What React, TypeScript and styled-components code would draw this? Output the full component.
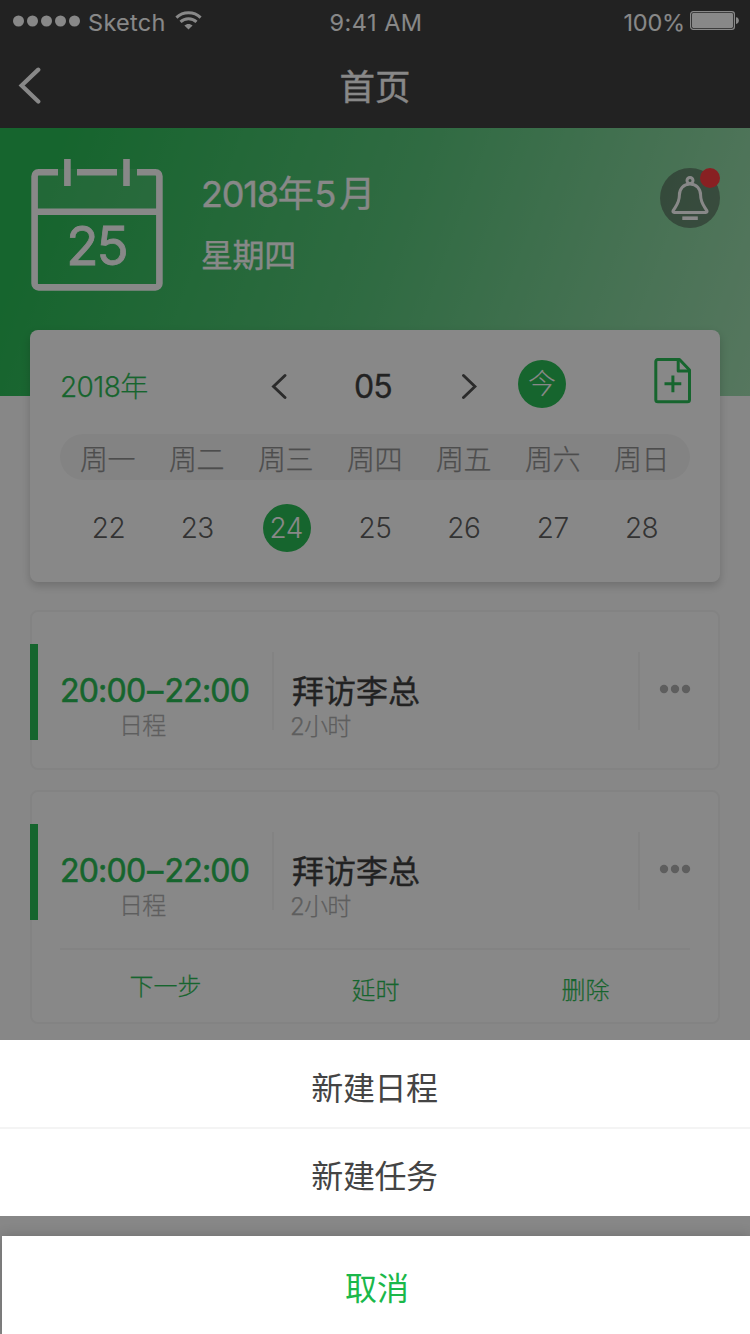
import React from 'react';
import styled, { createGlobalStyle, css } from 'styled-components';

const GlobalStyle = createGlobalStyle`
  * { box-sizing: border-box; }
  body { margin: 0; }
`;

const green = '#1bb84a';
const line = '#f4f4f4';

/* weight between regular and bold */
const medium = css`
  font-weight: 400;
  -webkit-text-stroke: 0.35px currentColor;
`;

/* weight between light and regular */
const light = css`
  font-weight: 300;
  -webkit-text-stroke: 0.25px currentColor;
`;

const Screen = styled.div`
  position: relative;
  width: 750px;
  height: 1334px;
  overflow: hidden;
  background: #fdfdfd;
  color: #333;
  font-family: Inter, 'Noto Sans CJK SC', sans-serif;
  font-weight: 400;
`;

const StatusBar = styled.div`
  display: grid;
  grid-template-columns: 1fr auto 1fr;
  align-items: center;
  height: 40px;
  padding: 5px 11px 0 13px;
  background: #333;
  color: #fff;
  font-size: 23.5px;
  line-height: 35px;
  letter-spacing: 0.5px;
  white-space: nowrap;
`;

const StatusGroup = styled.div<{ $end?: boolean }>`
  display: flex;
  align-items: center;
  justify-content: ${p => (p.$end ? 'flex-end' : 'flex-start')};
  svg { display: block; margin-top: -4px; }
`;

const Carrier = styled.span`
  margin: 0 9px 0 7px;
  letter-spacing: 0.3px;
`;

const Percent = styled.span`
  margin-right: 5px;
  letter-spacing: -0.2px;
`;

const NavBar = styled.header`
  display: grid;
  grid-template-columns: 60px 1fr 60px;
  align-items: center;
  height: 88px;
  padding-top: 3px;
  background: #333;
  color: #fff;
  svg { display: block; margin-left: 18px; }
`;

const NavTitle = styled.h1`
  ${medium}
  margin: 0;
  padding-top: 4px;
  font-size: 35.5px;
  line-height: 50px;
  text-align: center;
`;

const Hero = styled.section`
  display: flex;
  align-items: flex-start;
  height: 268px;
  padding: 30px 30px 0;
  background: linear-gradient(110deg, ${green} 8%, #4dc472 50%, #89d69f 88%, #9bdcac 100%);
  color: #fff;
`;

const HeroCalendar = styled.div`
  display: grid;
  width: 134px;
  height: 134px;
  svg, span { grid-area: 1 / 1; }
  span {
    ${medium}
    padding: 61px 1px 0 0;
    font-size: 53px;
    line-height: 54px;
    letter-spacing: -2px;
    text-align: center;
    -webkit-text-stroke-width: 0.8px;
  }
`;

const HeroDate = styled.div`
  ${medium}
  flex: 1;
  padding: 9px 0 0 37px;
`;

const HeroMonth = styled.div`
  font-size: 36px;
  line-height: 54px;
  letter-spacing: -1.2px;
`;

const MonthNumber = styled.span`
  margin: 0 4px 0 2px;
`;

const HeroWeekday = styled.div`
  padding-top: 8px;
  font-size: 32px;
  line-height: 54px;
  letter-spacing: -0.4px;
`;

const BellButton = styled.div`
  position: relative;
  width: 60px;
  height: 60px;
  margin-top: 10px;
  border-radius: 50%;
  background: rgba(51, 51, 51, 0.5);
  svg { display: block; }
`;

const BellDot = styled.i`
  position: absolute;
  top: 0;
  right: 0;
  width: 20px;
  height: 20px;
  border-radius: 50%;
  background: #ff2f33;
`;

const CalendarCard = styled.section`
  position: relative;
  height: 252px;
  margin: -66px 30px 28px;
  padding-top: 24px;
  border-radius: 8px;
  background: #fff;
  box-shadow: 0 4px 10px rgba(0, 0, 0, 0.2);
`;

const CalendarHead = styled.div`
  display: grid;
  grid-template-columns: 211px 80px 110px 57px 135px 1fr;
  align-items: center;
  height: 60px;
  padding-left: 30px;
  svg { display: block; margin-top: 5px; }
  svg:last-child { margin: 0 0 8px 0.5px; }
`;

const YearLabel = styled.span`
  ${light}
  padding-top: 1px;
  color: ${green};
  font-size: 28px;
  letter-spacing: -0.6px;
`;

const MonthLabel = styled.span`
  ${medium}
  margin-left: 3px;
  padding-top: 5px;
  font-size: 32px;
  letter-spacing: -1px;
`;

const Circle = styled.span`
  display: grid;
  place-items: center;
  width: 48px;
  height: 48px;
  border-radius: 50%;
  background: ${green};
  color: #fff;
  font-weight: 300;
  line-height: 48px;
`;

const TodayCircle = styled(Circle)`
  font-size: 28px;
`;

const week = css`
  display: grid;
  grid-template-columns: repeat(7, 1fr);
  justify-items: center;
  align-items: center;
  font-size: 28px;
`;

const WeekHead = styled.div`
  ${week}
  ${light}
  height: 46px;
  margin: 20px 30px 0;
  padding: 1px 4px 0 3px;
  border-radius: 23px;
  background: #f5f5f5;
  color: #888;
  letter-spacing: -0.5px;
`;

const WeekDays = styled.div`
  ${week}
  height: 48px;
  margin: 24px 34px 0;
  color: #555;
  font-weight: 300;
  letter-spacing: -0.5px;
  ${Circle} {
    margin-left: 1px;
    padding-right: 1px;
  }
`;

const ScheduleCard = styled.article<{ $tall?: boolean }>`
  position: relative;
  height: ${p => (p.$tall ? 234 : 160)}px;
  margin: 0 30px 20px;
  border: 2px solid ${line};
  border-radius: 8px;
  background: #fff;
`;

const Accent = styled.i`
  position: absolute;
  left: -2px;
  top: 32px;
  width: 8px;
  height: 96px;
  background: ${green};
`;

const ScheduleRow = styled.div`
  display: flex;
  height: 78px;
  margin-top: 40px;
`;

const TimeCell = styled.div`
  width: 242px;
  padding: 15px 0 0 28px;
  border-right: 2px solid ${line};
  white-space: nowrap;
`;

const TimeRange = styled.div`
  ${medium}
  color: ${green};
  font-size: 32px;
  line-height: 48px;
  letter-spacing: -0.8px;
  -webkit-text-stroke-width: 0.6px;
`;

const Dash = styled.span`
  margin: 0 2px;
`;

const Caption = styled.div<{ $indent?: number }>`
  ${light}
  margin-top: -6px;
  padding-left: ${p => p.$indent || 0}px;
  color: #aaa;
  font-size: 24px;
  line-height: 34px;
  letter-spacing: -0.8px;
`;

const TopicCell = styled.div`
  flex: 1;
  padding: 15px 0 0 16px;
  border-right: 2px solid ${line};
`;

const Topic = styled.div`
  ${medium}
  padding: 1px 0 0 2px;
  margin-bottom: -1px;
  font-size: 32px;
  line-height: 48px;
`;

const MoreCell = styled.div`
  width: 78px;
  padding: 32px 0 0 19px;
  svg { display: block; }
`;

const Actions = styled.div`
  ${light}
  display: grid;
  grid-template-columns: repeat(3, 1fr);
  margin: 38px 28px 0;
  padding-top: 21px;
  border-top: 2px solid ${line};
  color: ${green};
  font-size: 24px;
  line-height: 40px;
  text-align: center;
`;

const Action = styled.span<{ $raised?: boolean }>`
  margin-top: ${p => (p.$raised ? -4 : 0)}px;
  padding-left: 1px;
`;

const Mask = styled.div`
  position: absolute;
  inset: 0;
  background: rgba(17, 17, 17, 0.5);
`;

const Sheet = styled.div`
  position: absolute;
  left: 0;
  right: 0;
  bottom: 0;
  height: 294px;
  overflow: hidden;
  font-size: 32px;
  text-align: center;
  letter-spacing: -0.4px;
`;

const SheetItem = styled.div`
  height: 88px;
  padding-right: 1px;
  background: #fff;
  color: #444;
  line-height: 97px;
  & + & {
    height: 89px;
    margin-top: -1px;
    border-top: 2px solid ${line};
    line-height: 95px;
  }
`;

const SheetCancel = styled.div`
  height: 98px;
  margin: 20px 0 0 2px;
  padding-left: 2px;
  background: #fff;
  color: ${green};
  line-height: 105px;
  letter-spacing: 0;
  box-shadow: 0 0 12px rgba(0, 0, 0, 0.2);
`;

const Chevron = ({ flip, size = 1, color = '#444' }: { flip?: boolean; size?: number; color?: string }) => (
  <svg width={16 * size} height={27 * size} viewBox="0 0 16 27" fill="none" stroke={color} strokeWidth="2.9" strokeLinecap="round">
    <path d={flip ? 'M2.5 2.5 14 13.5 2.5 24.5' : 'M14 2.5 2.5 13.5 14 24.5'} />
  </svg>
);

const SignalDots = () => (
  <svg width="68" height="12" viewBox="0 0 68 12" fill="#fff">
    {[5.5, 19.5, 33.5, 47.5, 61.5].map(x => <circle key={x} cx={x} cy="6" r="5.5" />)}
  </svg>
);

const Wifi = () => (
  <svg width="27" height="19" viewBox="0 0 27 19" fill="none" stroke="#fff" strokeWidth="2.9">
    <path d="M1.4 6.6C8 .1 19 .1 25.6 6.6" />
    <path d="M5.5 10.9c4.4-4.3 11.6-4.3 16 0" />
    <path d="M9.4 14.6c2.3-2.3 5.9-2.3 8.2 0l-4.1 4z" fill="#fff" stroke="none" />
  </svg>
);

const Battery = () => (
  <svg width="49" height="19" viewBox="0 0 49 19">
    <rect x=".6" y=".6" width="43.8" height="17.8" rx="2.6" fill="none" stroke="#fff" strokeWidth="1.2" />
    <rect x="2" y="2" width="41" height="15" rx="1.4" fill="#fff" />
    <path d="M46 6.2c3.8 0 3.8 6.8 0 6.8z" fill="#fff" />
  </svg>
);

const CalendarIcon = () => (
  <svg width="134" height="134" viewBox="0 0 134 134" fill="none" stroke="#fff" strokeWidth="6.6">
    <path d="M4.5 11h125v43H4.5z" fill="#fff" fillOpacity=".1" stroke="none" />
    <path d="M28 14.2H8.6a4 4 0 0 0-4 4v107.2a4 4 0 0 0 4 4h116.8a4 4 0 0 0 4-4V18.2a4 4 0 0 0-4-4H107M47 14.2h40M4.6 53.8h124.8M37.4 1v27M96.5 1v27" />
  </svg>
);

const Bell = () => (
  <svg width="60" height="60" viewBox="0 0 60 60" fill="none" stroke="#fff" strokeWidth="3" strokeLinejoin="round">
    <circle cx="30" cy="12.4" r="3" />
    <path d="M30 16c-6.5 0-10.6 5-10.6 11 0 8-3.2 10.5-6.2 15.5-.6 1.2-.2 2 1 2h31.6c1.2 0 1.6-.8 1-2-3-5-6.2-7.500-6.2-15.500 0-6-4.100-11-10.600-11z" />
    <path d="M22.3 50.2h15.5" strokeWidth="3.6" />
  </svg>
);

const AddFile = () => (
  <svg width="38" height="47" viewBox="0 0 38 47" fill="none" stroke={green} strokeWidth="3" strokeLinejoin="round">
    <path d="M3.8 2.5h21.7l10 10.5v29.7a2 2 0 0 1-2 2H3.8a2 2 0 0 1-2-2V4.5a2 2 0 0 1 2-2z" />
    <path d="M24.2 2.5v11.5h11.3M10.5 26.8h16.8M18.9 18.5v16.8" />
  </svg>
);

const More = () => (
  <svg width="32" height="10" viewBox="0 0 32 10" fill="#aaa">
    {[5, 16, 27].map(x => <circle key={x} cx={x} cy="5" r="4.2" />)}
  </svg>
);

const weekdays = ['周一', '周二', '周三', '周四', '周五', '周六', '周日'];
const days = [22, 23, 24, 25, 26, 27, 28];

const Schedule = ({ actions }: { actions?: string[] }) => (
  <ScheduleCard $tall={!!actions}>
    <Accent />
    <ScheduleRow>
      <TimeCell>
        <TimeRange>20:00<Dash>–</Dash>22:00</TimeRange>
        <Caption $indent={59}>日程</Caption>
      </TimeCell>
      <TopicCell>
        <Topic>拜访李总</Topic>
        <Caption>2小时</Caption>
      </TopicCell>
      <MoreCell><More /></MoreCell>
    </ScheduleRow>
    {actions && (
      <Actions>
        {actions.map((a, i) => <Action key={a} $raised={i === 0}>{a}</Action>)}
      </Actions>
    )}
  </ScheduleCard>
);

export default function App() {
  return (
    <Screen>
      <GlobalStyle />
      <StatusBar>
        <StatusGroup><SignalDots /><Carrier>Sketch</Carrier><Wifi /></StatusGroup>
        <span>9:41 AM</span>
        <StatusGroup $end><Percent>100%</Percent><Battery /></StatusGroup>
      </StatusBar>
      <NavBar>
        <Chevron size={1.45} color="#fff" />
        <NavTitle>首页</NavTitle>
      </NavBar>
      <Hero>
        <HeroCalendar><CalendarIcon /><span>25</span></HeroCalendar>
        <HeroDate>
          <HeroMonth>2018年<MonthNumber>5</MonthNumber>月</HeroMonth>
          <HeroWeekday>星期四</HeroWeekday>
        </HeroDate>
        <BellButton><Bell /><BellDot /></BellButton>
      </Hero>
      <CalendarCard>
        <CalendarHead>
          <YearLabel>2018年</YearLabel>
          <Chevron />
          <MonthLabel>05</MonthLabel>
          <Chevron flip />
          <TodayCircle>今</TodayCircle>
          <AddFile />
        </CalendarHead>
        <WeekHead>{weekdays.map(d => <span key={d}>{d}</span>)}</WeekHead>
        <WeekDays>
          {days.map(d => (d === 24 ? <Circle key={d}>{d}</Circle> : <span key={d}>{d}</span>))}
        </WeekDays>
      </CalendarCard>
      <Schedule />
      <Schedule actions={['下一步', '延时', '删除']} />
      <Mask />
      <Sheet>
        <SheetItem>新建日程</SheetItem>
        <SheetItem>新建任务</SheetItem>
        <SheetCancel>取消</SheetCancel>
      </Sheet>
    </Screen>
  );
}
